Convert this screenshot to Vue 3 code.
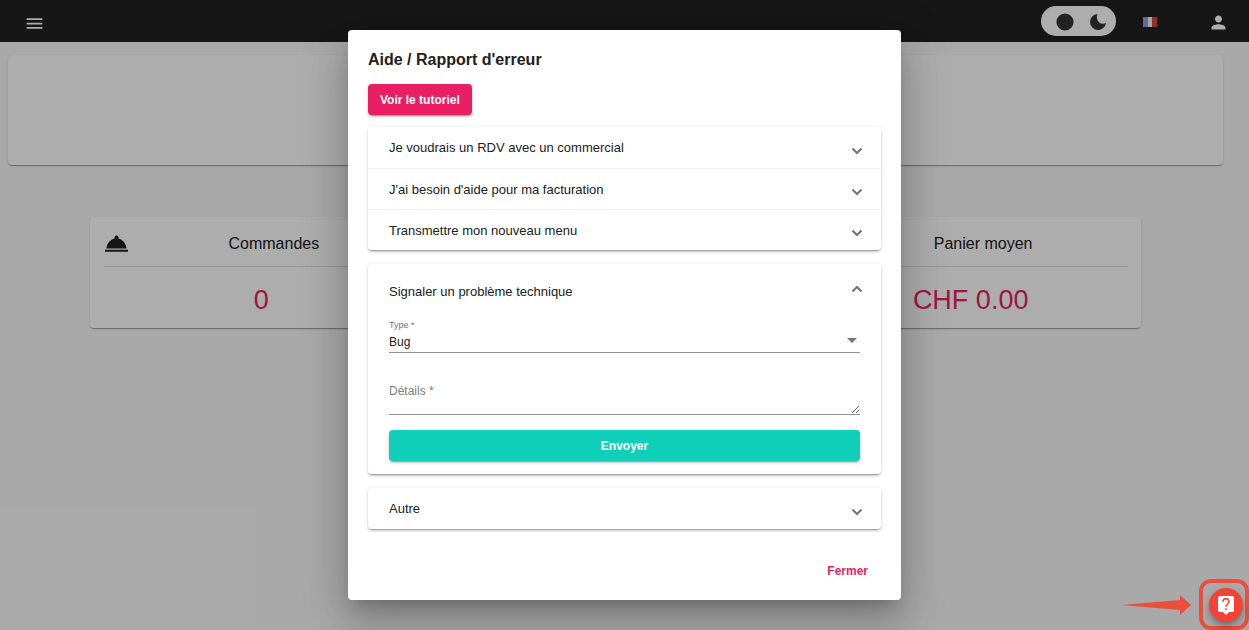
<script setup>
import { ref } from 'vue'

const requests = [
  'Je voudrais un RDV avec un commercial',
  "J'ai besoin d'aide pour ma facturation",
  'Transmettre mon nouveau menu',
]
const stats = [
  { label: 'Commandes', value: '0' },
  { label: "Chiffre d'affaires", value: 'CHF 0.00' },
  { label: 'Panier moyen', value: 'CHF 0.00' },
]
const type = ref('Bug')
const details = ref('')
</script>

<template>
  <div class="page">
    <header class="topbar">
      <button class="icon-button menu" aria-label="Menu">
        <svg viewBox="0 0 24 24"><path d="M3 18h18v-2H3v2zm0-5h18v-2H3v2zm0-7v2h18V6H3z" /></svg>
      </button>
      <div class="tools">
        <button class="theme" aria-label="Thème">
          <svg viewBox="0 0 18 18"><circle cx="9" cy="9" r="8.6" /></svg>
          <svg viewBox="0 0 18 18"><path d="M8.500 1A8 8 0 1 0 17 9.800C14.800 11.400 12 11 10 9.200 7.800 7.200 7.300 3.800 8.500 1z" /></svg>
        </button>
        <button class="flag" aria-label="Français"><i></i><i></i><i></i></button>
        <button class="icon-button" aria-label="Compte">
          <svg viewBox="0 0 24 24"><path d="M12 12c2.200 0 4-1.800 4-4s-1.800-4-4-4-4 1.800-4 4 1.800 4 4 4zm0 2c-2.700 0-8 1.300-8 4v2h16v-2c0-2.700-5.300-4-8-4z" /></svg>
        </button>
      </div>
    </header>

    <main class="content">
      <section class="card banner"></section>
      <section class="stats">
        <article v-for="s in stats" :key="s.label" class="card stat">
          <div class="stat-head">
            <svg viewBox="0 0 24 24"><path d="M1 18h22v2H1zM21.700 16.800H2.300C2.700 12.300 6 8.200 10.200 7.300a2 2 0 1 1 3.600 0c4.200.9 7.500 5 7.900 9.500z" /></svg>
            <h3>{{ s.label }}</h3>
          </div>
          <p>{{ s.value }}</p>
        </article>
      </section>
    </main>

    <div class="overlay">
      <section class="dialog" role="dialog" aria-modal="true" aria-labelledby="dialog-title">
        <h2 id="dialog-title">Aide / Rapport d'erreur</h2>
        <button class="primary">Voir le tutoriel</button>

        <div class="panel">
          <button v-for="r in requests" :key="r" class="row" aria-expanded="false">
            <span>{{ r }}</span>
            <svg viewBox="0 0 12 8"><path d="M1.500 1.500 6 6l4.500-4.500" /></svg>
          </button>
        </div>

        <div class="panel">
          <button class="row open" aria-expanded="true">
            <span>Signaler un problème technique</span>
            <svg viewBox="0 0 12 8"><path d="M1.500 6.500 6 2l4.500 4.500" /></svg>
          </button>
          <form class="form" @submit.prevent>
            <label class="small" for="type">Type *</label>
            <div class="select">
              <select id="type" v-model="type"><option>Bug</option></select>
              <svg viewBox="0 0 10 5"><path d="M0 0h10L5 5z" /></svg>
            </div>
            <div class="details">
              <label v-show="!details" for="details">Détails *</label>
              <textarea id="details" v-model="details" rows="1"></textarea>
            </div>
            <button class="send">Envoyer</button>
          </form>
        </div>

        <div class="panel">
          <button class="row" aria-expanded="false">
            <span>Autre</span>
            <svg viewBox="0 0 12 8"><path d="M1.500 1.500 6 6l4.500-4.500" /></svg>
          </button>
        </div>

        <footer><button class="close">Fermer</button></footer>
      </section>
    </div>

    <div class="help">
      <svg class="arrow" viewBox="0 0 70 20"><path d="M0 10 59 5V0l11 10-11 10v-5z" /></svg>
      <div class="frame">
        <button class="fab" aria-label="Aide">
          <svg viewBox="0 0 18 20">
            <path fill="#fff" d="M2.500 1h13Q17 1 17 2.500v13q0 1.500-1.500 1.500H12l-3 3-3-3H2.500Q1 17 1 15.500v-13Q1 1 2.500 1z" />
            <path fill="none" stroke="#f44336" stroke-width="1.600" d="M6 6.700C6 2.600 12 2.700 12 6.500c0 2.400-3 2.600-3 5.200M9 13.200V15" />
          </svg>
        </button>
      </div>
    </div>
  </div>
</template>

<style>
body { margin: 0; }
</style>

<style scoped>
* { box-sizing: border-box; }
.page {
  position: relative;
  min-height: 100vh;
  background: #fafafa;
  color: #212121;
  font-family: "Liberation Sans", Arial, sans-serif;
  font-size: 13px;
}
button {
  border: 0;
  padding: 0;
  background: none;
  font: inherit;
  color: inherit;
  cursor: pointer;
}
svg { display: block; flex: none; }
h2, h3, p { margin: 0; font-weight: 400; }

.topbar {
  display: flex;
  align-items: center;
  justify-content: space-between;
  height: 42px;
  padding: 0 20px 0 24px;
  background: #212121;
}
.icon-button { padding-top: 2px; }
.icon-button svg { width: 21px; height: 21px; fill: #fff; }
.icon-button.menu { padding-top: 5px; }
.tools { display: flex; align-items: center; }
.theme {
  display: flex;
  align-items: center;
  justify-content: space-between;
  width: 75px;
  height: 30px;
  margin-right: 27px;
  padding: 1px 9px 0 15px;
  border-radius: 15px;
  background: #fff;
}
.theme svg { width: 18px; height: 18px; fill: #333; }
.flag { display: flex; width: 14px; height: 10px; margin: 2px 51px 0 0; }
.flag i { flex: 1; background: #8c9fd0; }
.flag i:nth-child(2) { background: #f4f4f4; }
.flag i:nth-child(3) { background: #d8443c; }

.content { padding: 13px 26px 0 8px; }
.card {
  border-radius: 4px;
  background: #fff;
  box-shadow: 0 2px 1px -1px rgba(0, 0, 0, .2), 0 1px 1px rgba(0, 0, 0, .14), 0 1px 3px rgba(0, 0, 0, .12);
}
.banner { height: 110px; }
.stats {
  display: grid;
  grid-template-columns: repeat(3, 1fr);
  gap: 13px;
  margin: 52px 82px 0;
}
.stat { padding: 14px 13px 14px 14px; height: 111px; }
.stat-head {
  display: flex;
  align-items: center;
  height: 36px;
  padding-bottom: 10px;
  border-bottom: 1px solid #ddd;
}
.stat-head svg { width: 25px; height: 25px; fill: #212121; }
.stat-head h3 { flex: 1; text-align: center; font-size: 16px; line-height: 26px; }
.stat p { padding-top: 15px; text-align: center; font-size: 27px; line-height: 36px; color: #e91e63; }

.overlay {
  position: absolute;
  inset: 0;
  display: flex;
  align-items: center;
  justify-content: center;
  background: rgba(0, 0, 0, .32);
}
.dialog {
  width: 100%;
  max-width: 553px;
  padding: 20px 20px 14px;
  border-radius: 4px;
  background: #fff;
  box-shadow: 0 11px 15px -7px rgba(0, 0, 0, .2), 0 24px 38px 3px rgba(0, 0, 0, .14), 0 9px 46px 8px rgba(0, 0, 0, .12);
}
.dialog h2 { margin-bottom: 14px; font-size: 16px; font-weight: 700; line-height: 20px; }
.primary, .send {
  display: block;
  height: 31px;
  border-radius: 4px;
  color: #fff;
  box-shadow: 0 3px 1px -2px rgba(0, 0, 0, .2), 0 2px 2px rgba(0, 0, 0, .14), 0 1px 5px rgba(0, 0, 0, .12);
}
.primary { padding: 0 12px; margin-bottom: 12px; background: #e91e63; font-size: 12px; font-weight: 700; }
.panel {
  margin-bottom: 14px;
  border-radius: 4px;
  box-shadow: 0 3px 1px -2px rgba(0, 0, 0, .2), 0 2px 2px rgba(0, 0, 0, .14), 0 1px 5px rgba(0, 0, 0, .12);
}
.row {
  display: flex;
  align-items: center;
  justify-content: space-between;
  width: 100%;
  height: 41px;
  padding: 0 18px 0 21px;
  text-align: left;
}
.row + .row { border-top: 1px solid #f3f3f3; }
.row svg { width: 12px; height: 8px; margin-top: 6px; fill: none; stroke: #757575; stroke-width: 2; }
.row.open { height: 55px; }
.row.open svg { margin: 0 0 5px; }
.form { padding: 0 21px 13px; }
.small { display: block; font-size: 9px; line-height: 12px; color: #757575; }
.select { position: relative; border-bottom: 1px solid #949494; }
.select select {
  display: block;
  width: 100%;
  height: 21px;
  padding: 0;
  border: 0;
  appearance: none;
  background: none;
  font: inherit;
  font-size: 12px;
  color: inherit;
}
.select svg { position: absolute; right: 3px; top: 7px; width: 10px; height: 5px; fill: #757575; pointer-events: none; }
.details { position: relative; margin: 26px 0 15px; border-bottom: 1px solid #949494; }
.details label { position: absolute; left: 0; top: 3px; font-size: 12px; line-height: 18px; color: #808080; }
.details textarea {
  display: block;
  width: 100%;
  height: 35px;
  padding: 3px 0;
  border: 0;
  outline: 0;
  background: none;
  font: inherit;
  font-size: 12px;
  resize: vertical;
}
.send { width: 100%; background: #0fcfb9; font-size: 12px; font-weight: 700; }
footer { display: flex; justify-content: flex-end; padding: 12px 13px 0; }
.close { height: 31px; color: #e91e63; font-size: 12px; font-weight: 700; }

.help {
  position: absolute;
  right: 0;
  bottom: 0;
  display: flex;
  align-items: center;
  gap: 8px;
}
.arrow { width: 70px; height: 20px; fill: #e9503c; }
.frame {
  display: flex;
  align-items: center;
  justify-content: center;
  width: 50px;
  height: 51px;
  padding-left: 3px;
  border: 4px solid #e9503c;
  border-radius: 12px;
}
.fab {
  display: flex;
  align-items: center;
  justify-content: center;
  width: 34px;
  height: 34px;
  border-radius: 50%;
  background: #f44336;
  box-shadow: 0 3px 5px -1px rgba(0, 0, 0, .2), 0 5px 8px rgba(0, 0, 0, .2);
}
.fab svg { width: 18px; height: 20px; }
</style>
